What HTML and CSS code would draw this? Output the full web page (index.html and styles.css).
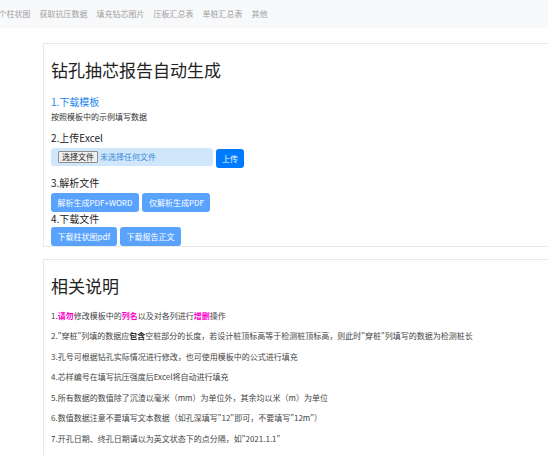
FILE: index.html
```html
<!DOCTYPE html>
<html lang="zh-CN">
<head>
  <meta charset="UTF-8" />
  <meta name="viewport" content="width=device-width, initial-scale=1.0">
  <title>钻孔抽芯报告自动生成</title>
  <link rel="stylesheet" href="styles.css">
</head>
<body>

<!-- Top Nav -->
<nav class="top-nav">
  <a href="#" class="nav-item">个柱状图</a>
  <a href="#" class="nav-item">获取抗压数据</a>
  <a href="#" class="nav-item">填充钻芯图片</a>
  <a href="#" class="nav-item">压板汇总表</a>
  <a href="#" class="nav-item">单桩汇总表</a>
  <a href="#" class="nav-item">其他</a>
</nav>

<!-- Generator -->
<section class="panel panel-tools">
  <h1 class="panel-title">钻孔抽芯报告自动生成</h1>

  <a href="#" class="step-link">1.下载模板</a>
  <p class="hint">按照模板中的示例填写数据</p>

  <h3 class="step-title">2.上传Excel</h3>
  <div class="upload-row">
    <label class="file-box">
      <span class="file-btn">选择文件</span>
      <span class="file-name">未选择任何文件</span>
    </label>
    <button class="btn btn-primary">上传</button>
  </div>

  <h3 class="step-title">3.解析文件</h3>
  <div class="btn-row">
    <button class="btn btn-disabled">解析生成PDF+WORD</button>
    <button class="btn btn-disabled">仅解析生成PDF</button>
  </div>

  <h3 class="step-title step-title-tight">4.下载文件</h3>
  <div class="btn-row btn-row-tight">
    <button class="btn btn-disabled">下载柱状图pdf</button>
    <button class="btn btn-disabled">下载报告正文</button>
  </div>
</section>

<!-- Notes -->
<section class="panel panel-notes">
  <h1 class="panel-title">相关说明</h1>
  <p class="note">1.<b class="warn">请勿</b>修改模板中的<b class="warn">列名</b>以及对各列进行<b class="warn">增删</b>操作</p>
  <p class="note">2."穿桩"列填的数据应<b>包含</b>空桩部分的长度，若设计桩顶标高等于检测桩顶标高，则此时"穿桩"列填写的数据为检测桩长</p>
  <p class="note">3.孔号可根据钻孔实际情况进行修改，也可使用模板中的公式进行填充</p>
  <p class="note">4.芯样编号在填写抗压强度后Excel将自动进行填充</p>
  <p class="note">5.所有数据的数值除了沉渣以毫米（mm）为单位外，其余均以米（m）为单位</p>
  <p class="note">6.数值数据注意不要填写文本数据（如孔深填写"12"即可，不要填写"12m"）</p>
  <p class="note">7.开孔日期、终孔日期请以为英文状态下的点分隔，如"2021.1.1"</p>
</section>

</body>
</html>
```

FILE: styles.css
```css
html, body {
  margin: 0;
  overflow: hidden;
}

body {
  font-family: "Noto Sans CJK SC", "Liberation Sans", sans-serif;
  background-color: #fff;
  color: #333;
}

/* top nav */
.top-nav {
  height: 28px;
  background: #f8f9fa;
  display: flex;
  align-items: center;
  white-space: nowrap;
}

.top-nav .nav-item {
  font-size: 8px;
  line-height: 12px;
  color: #a0a0a0;
  text-decoration: none;
  padding: 0 4.5px;
}

.top-nav .nav-item:first-child {
  margin-left: -6px;
}

/* cards */
.panel {
  width: 600px;
  margin: 15px 0 0 43px;
  padding: 15px 0 0 7px;
  border: 1px solid #e9e9e9;
}

.panel-notes {
  margin-top: 12px;
  padding-bottom: 60px;
}

.panel-title {
  font-size: 17px;
  font-weight: 400;
  line-height: 22px;
  color: #222;
  margin: 0 0 14px;
}

.panel-notes .panel-title {
  margin-bottom: 13px;
}

.step-link {
  display: block;
  font-size: 10px;
  line-height: 14px;
  color: #1a85f0;
  text-decoration: none;
}

.hint {
  font-size: 8px;
  line-height: 12px;
  margin: 2px 0 0;
  color: #333;
}

.step-title {
  font-size: 10px;
  font-weight: 400;
  line-height: 14px;
  color: #222;
  margin: 8px 0 0;
}

.step-title-tight {
  margin-top: 0;
}

/* upload */
.upload-row {
  display: flex;
  align-items: flex-start;
  gap: 3px;
  margin-top: 2.5px;
}

.file-box {
  width: 162px;
  height: 18px;
  box-sizing: border-box;
  padding-left: 7px;
  display: flex;
  align-items: center;
  background: #cfe6fb;
  border-radius: 3px;
}

.file-btn {
  font-size: 8px;
  line-height: 10px;
  padding: 0 3px;
  color: #222;
  background: #efefef;
  border: 1px solid #8f8f8f;
  border-radius: 1px;
}

.file-name {
  font-size: 8px;
  color: #3b8ad9;
  margin-left: 2px;
}

/* buttons */
.btn {
  height: 19px;
  padding: 0 6.5px;
  font-family: inherit;
  font-size: 8px;
  line-height: 19px;
  color: #fff;
  border: 0;
  border-radius: 3px;
  white-space: nowrap;
}

.btn-primary {
  background: #007bff;
  margin-top: 1px;
  padding: 0 6px;
}

.btn-disabled {
  background: #59a3ff;
}

.btn-row {
  display: flex;
  gap: 3.5px;
  margin-top: 3px;
}

.btn-row-tight {
  margin-top: 1px;
}

/* notes */
.note {
  font-size: 8px;
  line-height: 12px;
  color: #444;
  margin: 0 0 8.5px;
  white-space: nowrap;
}

.note b {
  font-weight: 700;
  color: #222;
}

.note .warn {
  color: #f0c;
}
```
